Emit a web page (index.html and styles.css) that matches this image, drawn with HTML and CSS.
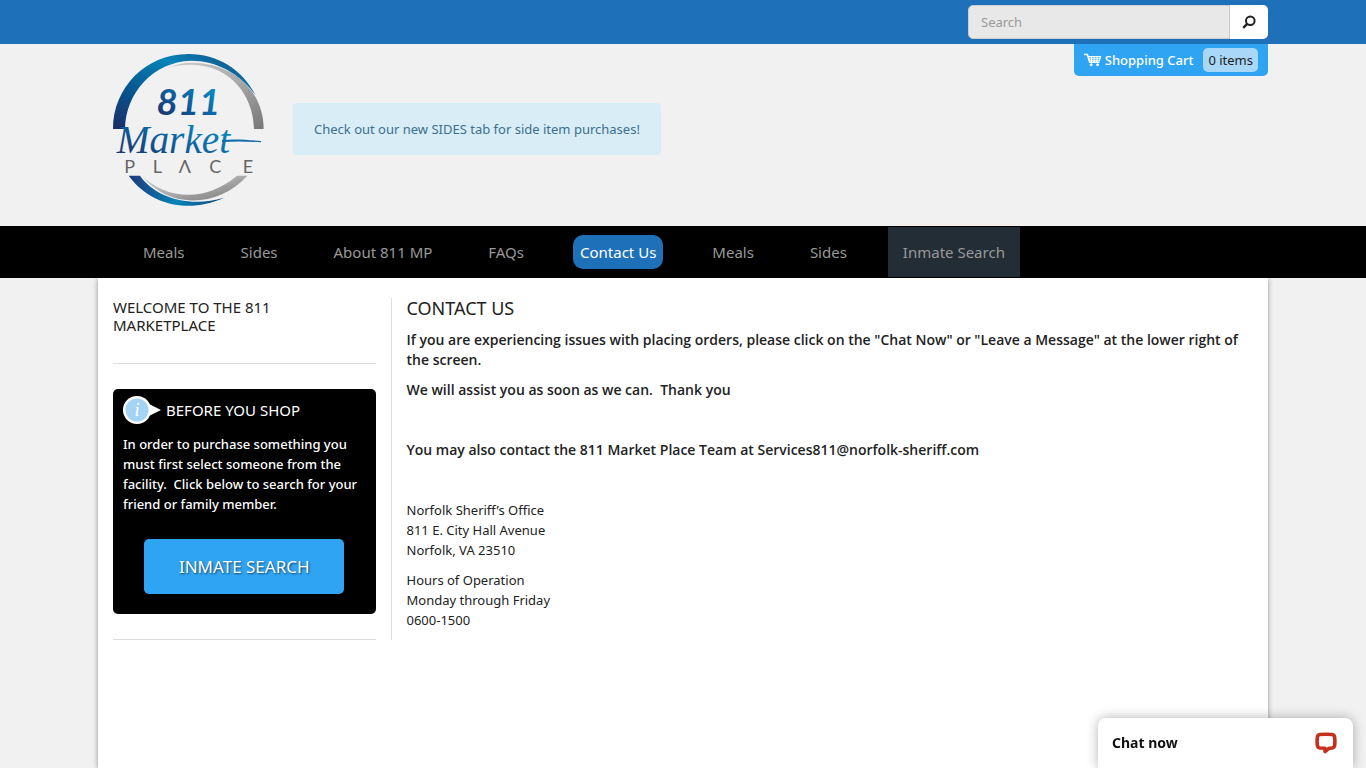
FILE: index.html
```html
<!DOCTYPE html>
<html lang="en">
<head>
<meta charset="utf-8">
<meta name="viewport" content="width=device-width, initial-scale=1">
<title>Contact Us - 811 Market Place</title>
<link rel="stylesheet" href="styles.css">
</head>
<body>
<div class="topbar">
  <div class="container topbar-inner">
    <form class="search" role="search">
      <input class="search-input" type="text" placeholder="Search" aria-label="Search">
      <button class="search-button" type="button" aria-label="Search">
        <svg width="14" height="14" viewBox="0 0 14 14" fill="none" stroke="#222" stroke-width="2"><circle cx="8.3" cy="5.7" r="4.3"/><path d="M5.2 8.8 1.2 12.8" stroke-width="2.4"/></svg>
      </button>
    </form>
  </div>
</div>

<header class="container header">
  <a class="logo" href="#" aria-label="811 Market Place">
    <svg width="151" height="152" viewBox="39 30 453 456">
      <defs>
        <linearGradient id="blue" x1="0" y1="1" x2="1" y2="0"><stop offset="0" stop-color="#1c2c66"/><stop offset=".35" stop-color="#065a94"/><stop offset=".65" stop-color="#0784b8"/><stop offset="1" stop-color="#17427c"/></linearGradient>
        <linearGradient id="low" x1="0" y1="0" x2="1" y2="0"><stop offset="0" stop-color="#1d3a78"/><stop offset=".5" stop-color="#0784b8"/><stop offset="1" stop-color="#17427c"/></linearGradient>
        <linearGradient id="gray" x1="0" y1="0" x2="1" y2="1"><stop offset="0" stop-color="#ccc"/><stop offset=".5" stop-color="#aaa"/><stop offset="1" stop-color="#777"/></linearGradient>
        <linearGradient id="ink" x1="0" y1="1" x2="1" y2="0"><stop offset="0" stop-color="#1c2860"/><stop offset=".5" stop-color="#0d62a0"/><stop offset=".8" stop-color="#0c86bd"/><stop offset="1" stop-color="#1a4c88"/></linearGradient>
      </defs>
      <path fill="url(#blue)" d="M39 255C39 130 138 30 265 30c87 0 161 45 202 124C419 88 350 50 272 50 160 54 77 145 75 255Z"/>
      <path fill="url(#gray)" d="M203 71c35-14 70-18 110-12 105 14 178 95 178 196h-29c-2-105-75-186-172-192-32-2-57 0-87 8Z"/>
      <path fill="url(#low)" d="M86 395h34c44 64 148 98 252 66-105 48-220 24-286-66Z"/>
      <path fill="url(#gray)" d="M126 395c68 68 186 84 285 0h31c-88 98-238 100-316 0Z"/>
      <text class="logo-number" x="265" y="214" text-anchor="middle" fill="url(#ink)">811</text>
      <text class="logo-script" x="50" y="328" fill="url(#ink)">Market</text>
      <path fill="#0c6da9" d="M366 288c40-4 77 0 117 3v4c-40-3-77-4-117-1Z"/>
      <text class="logo-place" x="73 158 236 328 428" y="387">PLΛCE</text>
    </svg>
  </a>
  <p class="alert">Check out our new SIDES tab for side item purchases!</p>
  <a class="cart" href="#">
    <svg width="18" height="14" viewBox="0 0 18 14" fill="none" stroke="#fff"><path d="M0 1.5h3.4l2.3 7.8h9.8" stroke-width="1.6"/><path d="M4.2 3.6h12.6M5 5.8h11.2M15.8 7.8H5.6M7.4 3v6M10.2 3v6M13 3v6M16.8 3l-1.5 5" stroke-width="1.1"/><circle cx="7.2" cy="11.8" r="1" fill="#fff"/><circle cx="13.6" cy="11.8" r="1" fill="#fff"/></svg>
    <span class="cart-label">Shopping Cart</span>
    <span class="badge">0 items</span>
  </a>
</header>

<nav class="navbar">
  <div class="container">
    <ul class="menu">
      <li><a href="#">Meals</a></li>
      <li><a href="#">Sides</a></li>
      <li><a href="#">About 811 MP</a></li>
      <li><a href="#">FAQs</a></li>
      <li><a class="active" href="#" aria-current="page">Contact Us</a></li>
      <li><a href="#">Meals</a></li>
      <li><a href="#">Sides</a></li>
      <li class="menu-search"><a href="#">Inmate Search</a></li>
    </ul>
  </div>
</nav>

<main class="container page">
  <div class="columns">
    <aside class="sidebar">
      <h2 class="welcome">WELCOME TO THE 811 MARKETPLACE</h2>
      <section class="shop-box">
        <h2 class="shop-title">
          <svg width="38" height="28" viewBox="0 0 38 28"><path fill="#fff" d="M26 8 38 14 26 20Z"/><circle cx="14" cy="14" r="14" fill="#fff"/><circle cx="14" cy="14" r="11.5" fill="#a3d4f5"/><text class="info-mark" x="14" y="20" text-anchor="middle">i</text></svg>
          BEFORE YOU SHOP
        </h2>
        <p class="shop-text">In order to purchase something you must first select someone from the facility.&nbsp; Click below to search for your friend or family member.</p>
        <a class="shop-button" href="#">INMATE SEARCH</a>
      </section>
    </aside>
    <article class="content">
      <h1>CONTACT US</h1>
      <p><strong>If you are experiencing issues with placing orders, please click on the "Chat Now" or "Leave a Message" at the lower right of the screen.</strong></p>
      <p><strong>We will assist you as soon as we can.&nbsp; Thank you</strong></p>
      <p>&nbsp;</p>
      <p><strong>You may also contact the 811 Market Place Team at Services811@norfolk-sheriff.com</strong></p>
      <p>&nbsp;</p>
      <p>Norfolk Sheriff’s Office<br>811 E. City Hall Avenue<br>Norfolk, VA 23510</p>
      <p>Hours of Operation<br>Monday through Friday<br>0600-1500</p>
    </article>
  </div>
</main>

<button class="chat" type="button">
  <span>Chat now</span>
  <svg width="22" height="22" viewBox="0 0 22 22"><path fill="none" stroke="#c4301c" stroke-width="3.6" stroke-linejoin="round" d="M5 2.5Q11 1.900 17 2.500 19.300 2.800 19.600 5 20.200 9.500 19.600 13.500 19.300 15.700 17 16L14 16.300 10 19.500V16.300L5 16Q2.700 15.700 2.400 13.500 1.800 9.500 2.400 5 2.700 2.800 5 2.500Z"/></svg>
</button>
</body>
</html>
```
FILE: styles.css
```css
* { box-sizing: border-box; }

body {
  margin: 0;
  min-height: 100vh;
  display: flex;
  flex-direction: column;
  background: #f1f1f1;
  color: #222;
  font: 13px/20px "Noto Sans", "Open Sans", sans-serif;
}

h1, h2, p, ul { margin: 0; }
a { color: inherit; text-decoration: none; }
svg { display: block; flex: none; }
strong { font: 600 14px/20px "Open Sans", "Noto Sans", sans-serif; }

.container {
  width: 100%;
  max-width: 1170px;
  margin: 0 auto;
}

.topbar { background: #1e70b8; }
.topbar-inner {
  display: flex;
  justify-content: flex-end;
  padding: 5px 0;
}
.search {
  display: flex;
  width: 300px;
  height: 34px;
}
.search-input {
  flex: 1;
  min-width: 0;
  padding: 0 12px;
  border: 1px solid #ccc;
  border-radius: 5px 0 0 5px;
  background: #e8e8e8;
  color: #222;
  font: inherit;
}
.search-input::placeholder { color: #999; opacity: 1; }
.search-button {
  display: flex;
  align-items: center;
  justify-content: center;
  width: 38px;
  padding: 0;
  border: 0;
  border-radius: 0 5px 5px 0;
  background: #fff;
}

.header {
  display: flex;
  align-items: flex-start;
  padding-left: 15px;
  height: 182px;
}
.logo { margin-top: 10px; }
.logo-number { font: italic 700 110px "Lato", sans-serif; }
.logo-script { font: italic 400 118px "Liberation Serif", serif; }
.logo-place { font: 400 54px "Lato", sans-serif; fill: #666; }
.alert {
  margin: 59px 0 0 29px;
  padding: 15px 20px;
  border: 1px solid #d3edf3;
  border-radius: 4px;
  background: #d9edf7;
  color: #3c6f8d;
}
.cart {
  display: flex;
  align-items: center;
  margin-left: auto;
  padding: 4px 10px;
  border-radius: 0 0 5px 5px;
  background: #2fa4f3;
  color: #fff;
}
.cart-label { margin: 0 10px 0 3px; font-weight: 500; }
.badge {
  padding: 2px 5px;
  border-radius: 5px;
  background: #a8d7f8;
  color: #222;
}

.navbar { background: #000; }
.menu {
  display: flex;
  align-items: center;
  gap: 42px;
  height: 52px;
  padding: 0 0 0 38px;
  list-style: none;
  color: #999;
  font-size: 15px;
  white-space: nowrap;
}
.menu a {
  display: block;
  padding: 7px;
}
.menu .active {
  border-radius: 10px;
  background: #1e70b8;
  color: #fff;
}
.menu-search { margin-left: -8px; }
.menu .menu-search a {
  padding: 15px;
  background: #222d36;
}

.page {
  flex: 1;
  padding-top: 20px;
  background: #fff;
  box-shadow: 0 1px 5px rgba(0, 0, 0, .4);
  clip-path: inset(0 -10px);
}
.columns {
  display: grid;
  grid-template-columns: 1fr 3fr;
}
.sidebar { padding: 0 15px; }
.welcome {
  padding-bottom: 29px;
  border-bottom: 1px solid #ddd;
  font-size: 15px;
  font-weight: 400;
  line-height: 18px;
}
.shop-box {
  margin: 25px 0;
  padding: 7px 10px 20px;
  border-radius: 5px;
  background: #000;
  color: #fff;
}
.sidebar::after {
  content: "";
  display: block;
  border-bottom: 1px solid #ddd;
}
.shop-title {
  display: flex;
  align-items: center;
  gap: 5px;
  margin-bottom: 10px;
  font-size: 15px;
  font-weight: 400;
}
.info-mark { font: italic 18px "Liberation Serif", serif; fill: #fff; }
.shop-text { font-weight: 500; }
.shop-button {
  display: block;
  width: 200px;
  margin: 25px auto 0;
  border-radius: 5px;
  background: #2fa4f3;
  font-size: 17px;
  line-height: 55px;
  text-align: center;
  text-shadow: 1px 1px 2px rgba(0, 0, 0, .6);
}

.content {
  padding: 0 15px;
  border-left: 1px solid #ddd;
}
.content h1 {
  margin-bottom: 12px;
  font-size: 18px;
  font-weight: 400;
  line-height: 20px;
}
.content p { margin-bottom: 10px; }

.chat {
  position: fixed;
  right: 13px;
  bottom: 0;
  display: flex;
  align-items: center;
  justify-content: space-between;
  width: 255px;
  height: 50px;
  padding: 0 16px 0 14px;
  border: 0;
  border-radius: 8px 8px 0 0;
  background: #fff;
  box-shadow: 0 0 12px rgba(0, 0, 0, .3);
  color: #111;
  font: 700 14px/20px "Noto Sans", "Open Sans", sans-serif;
}
```
